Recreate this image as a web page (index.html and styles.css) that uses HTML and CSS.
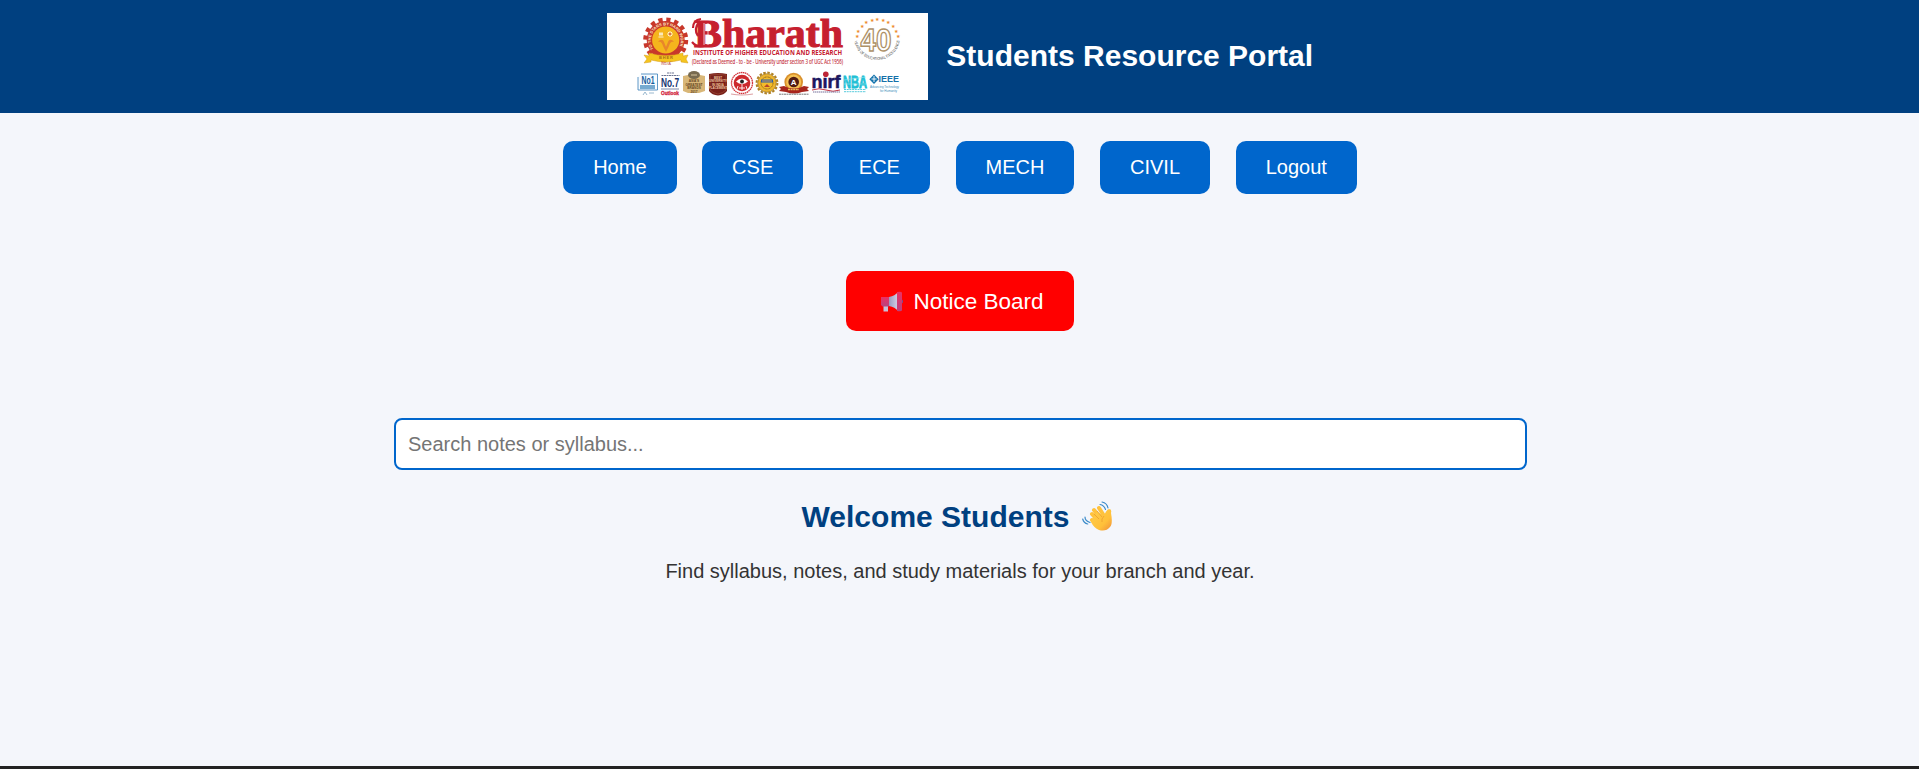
FILE: index.html
```html
<!DOCTYPE html>
<html lang="en">
<head>
<meta charset="utf-8">
<title>Students Resource Portal</title>
<link rel="stylesheet" href="styles.css">
</head>
<body>
<header class="header">
  <svg class="logo" viewBox="0 0 321 87" role="img" aria-label="Bharath Institute of Higher Education and Research">
    <defs>
      <path id="motto" d="M46.500 36A15 15 0 1 1 71 36"/>
      <path id="years" d="M247 24A23 23 0 1 0 293 24"/>
    </defs>
    <rect width="321" height="87" fill="#fff"/>
    <!-- gear crest -->
    <circle cx="58.7" cy="27" r="20.3" fill="none" stroke="#c8382b" stroke-width="4.4" stroke-dasharray="4.2 3.773"/>
    <circle cx="58.7" cy="27" r="19" fill="#c8382b"/>
    <circle cx="58.7" cy="27" r="13.6" fill="#f5b51d"/>
    <text class="sans bold" font-size="4" fill="#fbe7c0"><textPath href="#motto" textLength="62" lengthAdjust="spacingAndGlyphs">TO THE STARS BY HARD WORK</textPath></text>
    <rect x="52" y="19.5" width="4" height="3" fill="#fbe9bd"/>
    <path d="M51.5 24h5M61 19l4 4M65 19l-4 4M63 18v6M60 21h6" stroke="#fff" stroke-width=".8"/>
    <circle cx="63" cy="21" r="1" fill="#c8382b"/>
    <path d="M51 29c2-3 5-3 6 0l2 5 2-5c1-3 4-3 6 0-3-1-4 1-5 4l-3 6-3-6c-1-3-2-5-5-4z" fill="#e8862a"/>
    <path d="M37 42l5 1v-3q17 5 34 0v3l5-1-2 4 2 4-7-1v-2q-15 4-30 0v2l-7 1 3-4z" fill="#f5c51e" stroke="#d59a18" stroke-width=".5"/>
    <text class="sans bold" x="52" y="45.500" font-size="4" fill="#a86a17" textLength="14">BHER</text>
    <text class="sans" x="54" y="51.500" font-size="3.600" fill="#b8483b" textLength="10">INDIA</text>
    <!-- name -->
    <text class="serif bold" x="87" y="33.5" font-size="40" fill="#c6202f" stroke="#c6202f" stroke-width="1" textLength="149" lengthAdjust="spacingAndGlyphs">Bharath</text>
    <path d="M86 15q0-8 8-9M85 29q6 7 14 3M93 8q-7 8-2 15" fill="none" stroke="#c6202f" stroke-width="2.200"/>
    <path d="M97 10v22M101 10v22" stroke="#fff" stroke-width=".7"/>
    <text class="open bold" x="86" y="42.4" font-size="7" fill="#c6202f" textLength="149" lengthAdjust="spacingAndGlyphs">INSTITUTE OF HIGHER EDUCATION AND RESEARCH</text>
    <text class="open" x="85" y="50.8" font-size="6.8" fill="#c6303c" stroke="#c6303c" stroke-width=".15" textLength="151" lengthAdjust="spacingAndGlyphs">(Declared as Deemed - to - be - University under section 3 of UGC Act 1956)</text>
    <!-- 40 years emblem -->
    <g class="sans" font-size="5" fill="#ed8b2c" text-anchor="middle">
      <text x="249.7" y="25">★</text><text x="251.4" y="19.5">★</text><text x="254.7" y="14.6">★</text><text x="259.2" y="11">★</text><text x="264.5" y="8.7">★</text><text x="270" y="8">★</text><text x="275.7" y="8.7">★</text><text x="281" y="11">★</text><text x="285.6" y="14.6">★</text><text x="289" y="19.5">★</text><text x="290.8" y="25">★</text>
    </g>
    <text class="sans bold" x="253.500" y="38" font-size="31" fill="#fff" stroke="#ad9168" stroke-width="1.400" textLength="31" lengthAdjust="spacingAndGlyphs">40</text>
    <text class="sans" font-size="4" fill="#444"><textPath href="#years" startOffset="4" textLength="64" lengthAdjust="spacingAndGlyphs">YEARS OF EDUCATIONAL EXCELLENCE</textPath></text>
    <!-- No1 -->
    <path d="M34 61H50.5V77H31V64" fill="#f6fbff" stroke="#397fb7" stroke-width=".8"/>
    <text class="sans bold" x="34.5" y="71" font-size="11" fill="#145b9c" textLength="13" lengthAdjust="spacingAndGlyphs">No1</text>
    <path d="M33 73h15M33 75h15" stroke="#4b90c1" stroke-width="1.3"/>
    <path d="M36 82l2-3 2 3M42 80h5" fill="none" stroke="#9ab8ce"/>
    <!-- No.7 -->
    <path d="M60 60h7M54.500 62.500h18" stroke="#6e7591" stroke-width="1" stroke-dasharray="2 .5"/>
    <text class="sans bold" x="54" y="74" font-size="13" fill="#173570" textLength="18" lengthAdjust="spacingAndGlyphs">No.7</text>
    <path d="M54 76h18" stroke="#7d8aaa"/>
    <text class="sans bold" x="54" y="81.500" font-size="5" fill="#d32842" stroke="#d32842" stroke-width=".3" textLength="18" lengthAdjust="spacingAndGlyphs">Outlook</text>
    <!-- gold award -->
    <path d="M76 63l5-1h12l5 1v15l-6 2H81l-5-2z" fill="#d9b778"/>
    <ellipse cx="87" cy="62" rx="6" ry="4" fill="#776a50"/><path d="M84 62h6" stroke="#d7c59d"/>
    <text class="sans bold" font-size="3.2" fill="#62451f" text-anchor="middle"><tspan x="87" y="69.200">ASIA'S</tspan><tspan x="87" y="72.700">GREATEST</tspan><tspan x="87" y="76.200">BRANDS</tspan><tspan x="87" y="79.700">2017</tspan></text>
    <!-- maroon shield -->
    <path d="M102 61q9-2 18 0v17q-3 4-9 4.500-6-.5-9-4.500z" fill="#792019"/>
    <path d="M103 62q8-1 16 0v15q-3 3-8 4-5-1-8-4z" fill="none" stroke="#a85b43" stroke-width=".5"/>
    <text class="sans bold" font-size="3" fill="#edc5a1" text-anchor="middle"><tspan x="111" y="65.500">BEST</tspan><tspan x="111" y="69">UNIVERSITY</tspan><tspan x="111" y="72.500">IN INDIA</tspan><tspan x="111" y="76">PLACEMENT</tspan></text>
    <!-- red seal -->
    <circle cx="135" cy="70" r="10.500" fill="#fff" stroke="#d3343b" stroke-width="1.300" stroke-dasharray="1.500 .5"/>
    <circle cx="135" cy="70" r="8.300" fill="#cc292d"/><path d="M129 68.500q6-6 12 0-6 5-12 0" fill="#fff"/><path d="M135 71v6M132 75h6M131 73l-1 3M139 73l1 3" stroke="#fff" stroke-width=".9"/><circle cx="135" cy="68.500" r="1.900" fill="#222"/>
    <path d="M124 81q11 2 22 0" fill="none" stroke="#dca0a3" stroke-width="1.200"/>
    <!-- gold gear -->
    <circle cx="160" cy="70" r="10.400" fill="none" stroke="#b18222" stroke-width="2" stroke-dasharray="2.500 1.584"/>
    <circle cx="160" cy="70" r="9.300" fill="#edb52d" stroke="#87611d" stroke-width=".6"/>
    <circle cx="160" cy="70" r="6" fill="#f4bc29" stroke="#8a631e" stroke-width="1" stroke-dasharray="1 .5"/>
    <path d="M154 68h12" stroke="#2b60a5" stroke-width="3"/><path d="M155 68h10" stroke="#d5a05a"/><path d="M157 74l3-3 3 3z" fill="#b74828"/>
    <!-- grade A medal -->
    <circle cx="186.700" cy="69" r="9.300" fill="#d9902c"/><circle cx="186.700" cy="69" r="7.500" fill="#f5c154"/><circle cx="186.700" cy="69" r="5.300" fill="#521b12"/>
    <text class="sans bold" x="183.700" y="71.800" font-size="8" fill="#fff">A</text>
    <path d="M172 74l5-1q10 5 20 0l5 1-2 2 2 2-7 1q-8 3-16 0l-7-1 2-2z" fill="#a7251d"/><path d="M181 76.500h11" stroke="#edbf57" stroke-width="1.500" stroke-dasharray="2 .6"/>
    <path d="M172 81.200h30" stroke="#777" stroke-width="1" stroke-dasharray="2 .5"/>
    <!-- nirf -->
    <text class="sans bold" x="204.500" y="75" font-size="19" fill="#1c1760" stroke="#1c1760" stroke-width=".6" textLength="29" lengthAdjust="spacingAndGlyphs">nırf</text>
    <circle cx="218.800" cy="61.300" r="2.800" fill="#bd2536"/><path d="M205 77q7-2.500 14 0t14 0" stroke="#c23345" stroke-width="1" fill="none"/><path d="M206 79h27" stroke="#777099" stroke-width="1" stroke-dasharray="1.500 .5"/>
    <!-- NBA -->
    <text class="sans bold" x="236" y="74.500" font-size="16" fill="#20bfd5" stroke="#20bfd5" stroke-width=".8" textLength="24" lengthAdjust="spacingAndGlyphs">NBA</text>
    <path d="M237 67l22-3M237 71h22" stroke="#9be5ec" stroke-width=".6"/><path d="M237 76.500h22M237 78.700h22" stroke="#58cbdc" stroke-width="1" stroke-dasharray="2 .7"/>
    <!-- IEEE -->
    <path d="M267 61.500l4.700 4.700-4.700 4.700-4.700-4.700z" fill="#1474ad"/><path d="M267 63v6M264.500 66h5" stroke="#fff" stroke-width=".9"/>
    <text class="sans bold" x="271.500" y="69.200" font-size="9.500" fill="#1671a9" textLength="20.500" lengthAdjust="spacingAndGlyphs">IEEE</text>
    <g class="sans" fill="#398bb8" font-size="3.500"><text x="263" y="74.500" textLength="29" lengthAdjust="spacingAndGlyphs">Advancing Technology</text><text x="273" y="78.600" textLength="17" lengthAdjust="spacingAndGlyphs">for Humanity</text></g>
  </svg>
  <h1 class="title">Students Resource Portal</h1>
</header>
<nav class="nav">
  <a class="nav-link">Home</a><a class="nav-link">CSE</a><a class="nav-link">ECE</a><a class="nav-link">MECH</a><a class="nav-link">CIVIL</a><a class="nav-link">Logout</a>
</nav>
<div class="notice-row">
  <a class="notice">
    <svg class="horn" viewBox="0 0 22 22">
      <defs><linearGradient id="cone"><stop stop-color="#9c9bc0"/><stop offset="1" stop-color="#d4d0e7"/></linearGradient><linearGradient id="back" x1="0" y1="0" x2="0" y2="1"><stop stop-color="#eb3164"/><stop offset="1" stop-color="#b8437f"/></linearGradient></defs>
      <path d="M2.500 15h4.500v5.500H2.500z" fill="#c8bfd7"/>
      <path d="M0 6h8v9.500H1.500L0 14z" fill="url(#back)"/>
      <path d="M8 6q6-1 9-5v19q-3-4-9-5z" fill="url(#cone)"/>
      <ellipse cx="20.500" cy="10.500" rx="1.500" ry="2" fill="#70519a"/>
      <path d="M16 1q5-1 5 1v17q0 2-5 1z" fill="url(#back)"/>
    </svg>
    <span class="notice-text">Notice Board</span>
  </a>
</div>
<main class="main">
  <input class="search" type="text" placeholder="Search notes or syllabus...">
  <h2 class="welcome"><span>Welcome Students</span>
    <svg class="wave" viewBox="0 0 30 30">
      <defs><linearGradient id="skin" x1="0" y1="0" x2="1" y2="1"><stop stop-color="#ffce4b"/><stop offset=".65" stop-color="#ffc03a"/><stop offset="1" stop-color="#ef8d3b"/></linearGradient></defs>
      <g fill="none" stroke="#ffc23d" stroke-width="4" stroke-linecap="round"><path d="M10 13l8 9M12 9l9 11M17 7l7 11M10 19l7 5"/></g>
      <path d="M15 11l7 4q2-6 5-7 3 0 2 4 2 11-1 14-4 5-11 3-5-2-8-8z" fill="url(#skin)"/>
      <path d="M12 13l5 5M15 10l5 6M22 15q-3 3-2 6" fill="none" stroke="#e99a2c" stroke-width=".7"/>
      <g fill="none" stroke="#3b8bc9" stroke-width="1.200" stroke-linecap="round"><path d="M18 3.500q4 .5 5.500 5M20 1q5 1 6 6M3 16q0 4 5 5.500M.7 18q1 4 5 5"/></g>
    </svg>
  </h2>
  <p class="intro">Find syllabus, notes, and study materials for your branch and year.</p>
</main>
<footer class="footer"></footer>
</body>
</html>
```
FILE: styles.css
```css
* { box-sizing: border-box; }
body {
  margin: 0;
  height: 769px;
  overflow: hidden;
  display: flex;
  flex-direction: column;
  background: #f4f6fb;
  color: #333;
  font-family: "Liberation Sans", Arial, sans-serif;
  font-size: 20px;
}
.header {
  flex: none;
  height: 113px;
  padding-left: 1px;
  display: flex;
  align-items: center;
  justify-content: center;
  gap: 18.5px;
  background: #004080;
  color: #fff;
}
.logo { width: 321px; height: 87px; flex: none; }
.sans { font-family: "Liberation Sans", sans-serif; }
.serif { font-family: "Liberation Serif", serif; }
.open { font-family: "Open Sans", sans-serif; }
.bold { font-weight: 700; }
.title { margin: 0; font-size: 30px; line-height: 34px; padding-bottom: 2px; white-space: nowrap; }
.nav {
  flex: none;
  display: flex;
  justify-content: center;
  gap: 25.6px;
  padding: 28px 0 0 1px;
}
.nav-link {
  height: 53px;
  padding: 0 30px;
  line-height: 52px;
  border-radius: 10px;
  background: #0066cc;
  color: #fff;
}
.notice-row { flex: none; display: flex; justify-content: center; padding-top: 77px; }
.notice {
  width: 228px;
  height: 60px;
  display: flex;
  align-items: center;
  padding: 0 0 0 35px;
  gap: 11px;
  border-radius: 10px;
  background: #f00;
  color: #fff;
  font-size: 22.5px;
  white-space: nowrap;
}
.notice-text { padding-top: 2px; }
.horn { width: 22px; height: 22px; margin-top: 1px; flex: none; }
.main {
  flex: 1;
  display: flex;
  flex-direction: column;
  align-items: center;
  padding: 87px 0 0 2px;
}
.search {
  width: 1133px;
  height: 52px;
  padding: 0 12px;
  border: 2px solid #0066cc;
  border-radius: 8px;
  background: #fff;
  font: 20px "Liberation Sans", Arial, sans-serif;
}
.search::placeholder { color: #757575; }
.welcome {
  display: flex;
  align-items: center;
  gap: 13px;
  height: 34px;
  margin: 30px 0 0;
  padding-right: 7px;
  color: #004080;
  font-size: 30px;
  line-height: 34px;
}
.wave { width: 30px; height: 30px; margin-top: -2px; }
.intro { margin: 26px 0 0; padding-right: 1px; line-height: 23px; }
.footer { flex: none; height: 3px; background: #222; }
```
